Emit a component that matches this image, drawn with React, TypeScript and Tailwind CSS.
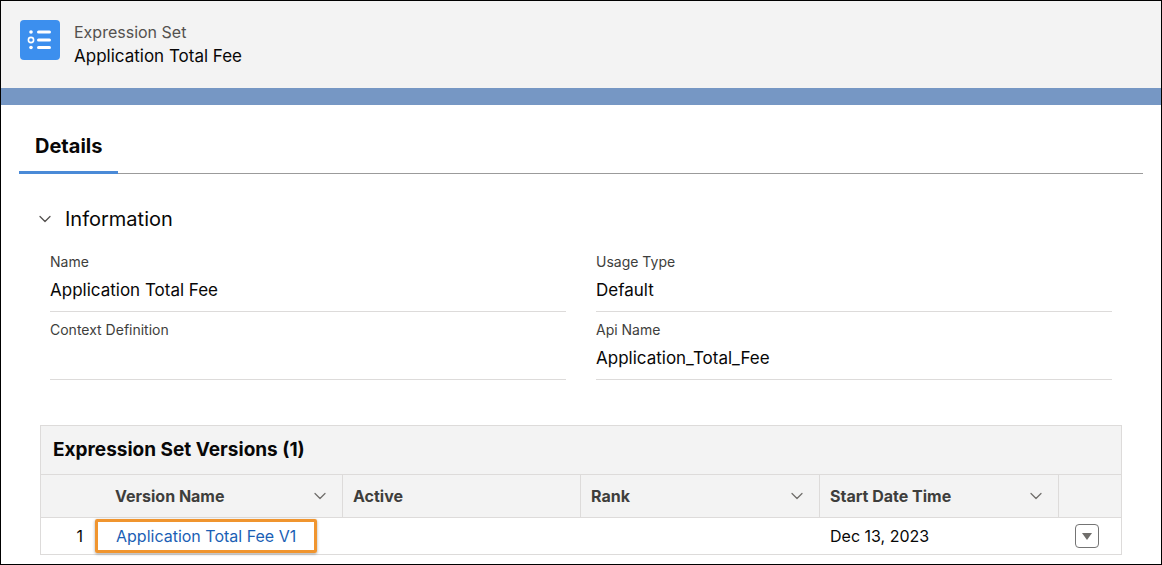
import React from 'react';
import { ChevronDown } from 'lucide-react';

const Field = ({ label, value }: { label: string; value: string }) => (
  <div className="flex flex-col h-[68px] border-b border-[#dddbda]">
    <span className="text-[14px] text-[#3e3e3c] mt-[9px] leading-[18px]">{label}</span>
    <span className="text-[17px] text-[#080707] mt-[8px] leading-[22px]">{value}</span>
  </div>
);

const HeadCell = ({ label, w, chevron = true, last = false }: { label: string; w: string; chevron?: boolean; last?: boolean }) => (
  <div className={`${w} flex items-center justify-between px-[10px] h-full ${last ? '' : 'border-r border-[#dddbda]'}`}>
    <span className="text-[16px] font-bold text-[#3e3e3c]">{label}</span>
    {chevron && <ChevronDown className="h-5 w-5 text-[#706e6b] mr-[2px]" strokeWidth={1.5} />}
  </div>
);

export default function App() {
  return (
    <div className="w-[1162px] h-[565px] border border-black bg-white overflow-hidden" style={{ fontFamily: 'Inter, "Liberation Sans", sans-serif' }}>
      <div className="h-[87px] bg-[#f3f3f3] flex items-start pt-[19px] pl-[19px]">
        <div className="w-10 h-10 rounded-[4px] bg-[#3c8fee] flex items-center justify-center">
          <svg width="26" height="22" viewBox="0 0 26 22" fill="white">
            <circle cx="4" cy="3" r="1.8" />
            <circle cx="4" cy="11" r="2.6" fill="none" stroke="white" strokeWidth="1.6" />
            <circle cx="4" cy="18.5" r="1.8" />
            <rect x="10" y="1.5" width="14" height="3" rx="1.5" />
            <rect x="10" y="9.5" width="14" height="3" rx="1.5" />
            <rect x="10" y="17" width="14" height="3" rx="1.5" />
          </svg>
        </div>
        <div className="ml-[14px] flex flex-col">
          <span className="text-[16px] text-[#54514f] leading-[22px] mt-[1px]">Expression Set</span>
          <span className="text-[17px] text-[#080707] leading-[24px] mt-[1px]">Application Total Fee</span>
        </div>
      </div>
      <div className="h-[17px] bg-[#7697c4]"></div>
      <div className="px-[18px]">
        <div className="mt-[26px] border-b border-[#9b9b9b] flex">
          <div className="px-[16px] pb-[10px] border-b-[3px] border-[#4a8ad7] -mb-px">
            <span className="text-[20px] font-bold text-[#080707]">Details</span>
          </div>
        </div>
        <div className="flex items-center mt-[30px] ml-[16px]">
          <ChevronDown className="h-5 w-5 text-[#54514f]" strokeWidth={1.5} />
          <span className="ml-[10px] text-[20px] text-[#080707]">Information</span>
        </div>
        <div className="grid grid-cols-2 gap-x-[30px] mx-[31px] mt-[10px]">
          <Field label="Name" value="Application Total Fee" />
          <Field label="Usage Type" value="Default" />
          <Field label="Context Definition" value="" />
          <Field label="Api Name" value="Application_Total_Fee" />
        </div>
        <div className="mx-[21px] mt-[45px] border border-[#dddbda]">
          <div className="h-[49px] bg-[#f3f3f3] flex items-center px-[12px] border-b border-[#dddbda]">
            <span className="text-[19px] font-bold text-[#080707]">Expression Set Versions (1)</span>
          </div>
          <div className="h-[43px] bg-[#f3f3f3] flex border-b border-[#dddbda]">
            <div className="w-[64px] h-full"></div>
            <HeadCell label="Version Name" w="w-[238px]" />
            <HeadCell label="Active" w="w-[238px]" chevron={false} />
            <HeadCell label="Rank" w="w-[239px]" />
            <HeadCell label="Start Date Time" w="w-[239px]" />
            <div className="flex-1"></div>
          </div>
          <div className="h-[36px] flex items-center text-[16px]">
            <div className="w-[54px] text-right pr-[12px] text-[#080707]">1</div>
            <div className="w-[248px] h-full flex items-center">
              <div className="border-[3px] border-[#f0952f] rounded-[2px] h-[34px] px-[18px] flex items-center shadow-[0_1px_3px_rgba(0,0,0,0.35)]">
                <span className="text-[#1b5fb5]">Application Total Fee V1</span>
              </div>
            </div>
            <div className="w-[477px]"></div>
            <div className="w-[239px] px-[10px] text-[#080707]">Dec 13, 2023</div>
            <div className="flex-1 flex justify-end pr-[22px]">
              <div className="w-[24px] h-[24px] border border-[#747474] rounded-[4px] flex items-center justify-center">
                <svg width="10" height="7" viewBox="0 0 10 7"><path d="M0 0h10L5 7z" fill="#706e6b" /></svg>
              </div>
            </div>
          </div>
        </div>
      </div>
    </div>
  );
}
